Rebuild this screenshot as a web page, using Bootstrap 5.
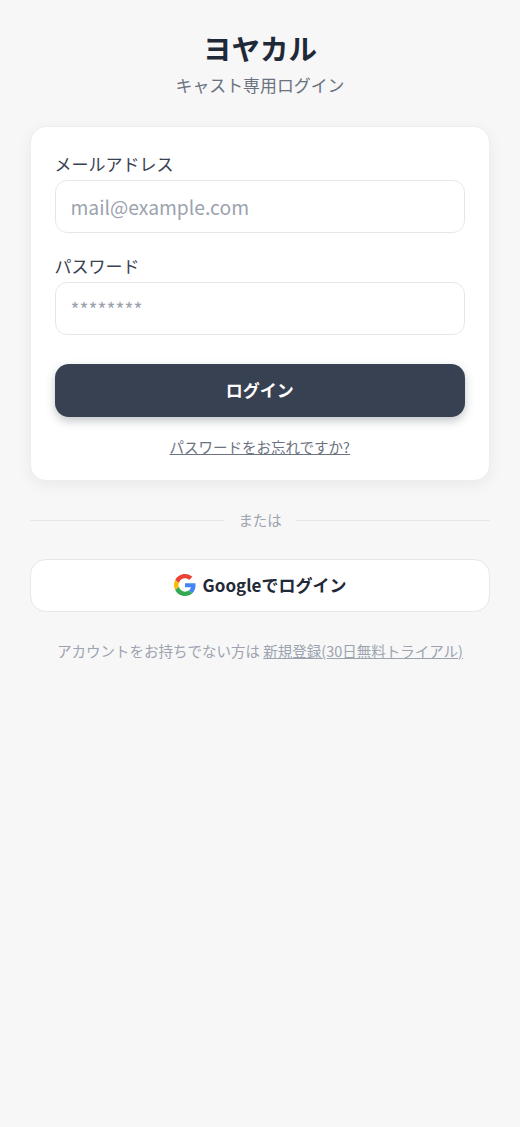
<!DOCTYPE html>
<html lang="ja">
<head>
<meta charset="utf-8">
<meta name="viewport" content="width=device-width, initial-scale=1">
<title>ヨヤカル</title>
<link rel="stylesheet" href="https://cdn.jsdelivr.net/npm/bootstrap@5.3.0/dist/css/bootstrap.min.css">
<style>
body{background:#f7f7f8;font-family:"Noto Sans CJK JP","Noto Sans",sans-serif;color:#1f2937;min-height:1127px}
.page-wrap{padding:29px 30px 0}
.brand-title{font-size:28.5px;font-weight:700;line-height:38px;color:#1f2937;margin:0 0 6px}
.brand-sub{font-size:16.9px;line-height:24px;color:#6b7280;margin:0 0 29px}
.login-card{border:1px solid #eceef1;border-radius:16px;box-shadow:0 4px 16px rgba(0,0,0,.06);padding:24px 24px 22px 23.5px}
.field-label{font-size:17px;line-height:26px;color:#374151;margin:0 0 3px;display:block}
.field-input.form-control{height:53px;border:1px solid #e5e7eb;border-radius:12px;font-size:19.3px;padding:0 15px;color:#1f2937}
.field-input.form-control::placeholder{color:#9ca3af;opacity:1}
.field-gap{margin-bottom:20px}
.field-last{margin-bottom:29px}
.btn-login.btn{height:53px;padding:0 12px 2px;background:#374151;border:0;border-radius:14px;color:#fff;font-size:17px;font-weight:700;box-shadow:0 4px 10px rgba(55,65,81,.3)}
.forgot-link{display:block;margin-top:19px;font-size:14.5px;line-height:22px;color:#6b7280;text-align:center}
.or-row{margin:28px 0 28px;color:#9ca3af;font-size:14.4px;line-height:22px;gap:14px}
.or-line{flex:1;height:1px;background:#e5e7eb}
.btn-google.btn{height:53px;padding:0 12px 2px;background:#fff;border:1px solid #e5e7eb;border-radius:16px;color:#1f2937;font-size:17px;font-weight:700;gap:7px}
.footer-note{margin:28px 0 0;font-size:14.5px;line-height:22px;color:#9ca3af;text-align:center}
.footer-note a{color:#9ca3af}
</style>
</head>
<body>
<main class="page-wrap">
  <header class="text-center">
    <h1 class="brand-title">ヨヤカル</h1>
    <p class="brand-sub">キャスト専用ログイン</p>
  </header>
  <form class="login-card bg-white">
    <div class="field-gap">
      <label class="field-label" for="em">メールアドレス</label>
      <input id="em" type="email" class="form-control field-input" placeholder="mail@example.com">
    </div>
    <div class="field-last">
      <label class="field-label" for="pw">パスワード</label>
      <input id="pw" type="password" class="form-control field-input" placeholder="********">
    </div>
    <button type="button" class="btn btn-login w-100">ログイン</button>
    <a href="#" class="forgot-link">パスワードをお忘れですか?</a>
  </form>
  <div class="or-row d-flex align-items-center">
    <span class="or-line"></span><span>または</span><span class="or-line"></span>
  </div>
  <button type="button" class="btn btn-google w-100 d-flex align-items-center justify-content-center">
    <svg width="22" height="22" viewBox="0 0 48 48" aria-hidden="true">
      <path fill="#EA4335" d="M24 9.5c3.54 0 6.71 1.22 9.21 3.6l6.85-6.85C35.9 2.38 30.47 0 24 0 14.62 0 6.51 5.38 2.56 13.22l7.98 6.19C12.43 13.72 17.74 9.5 24 9.5z"/>
      <path fill="#4285F4" d="M46.98 24.55c0-1.57-.15-3.09-.38-4.55H24v9.02h12.94c-.58 2.96-2.26 5.48-4.78 7.18l7.73 6c4.51-4.18 7.09-10.36 7.09-17.65z"/>
      <path fill="#FBBC05" d="M10.53 28.59c-.48-1.45-.76-2.99-.76-4.59s.27-3.14.76-4.59l-7.98-6.19C.92 16.46 0 20.12 0 24c0 3.88.92 7.54 2.56 10.78l7.97-6.19z"/>
      <path fill="#34A853" d="M24 48c6.48 0 11.93-2.13 15.89-5.81l-7.73-6c-2.15 1.45-4.92 2.3-8.16 2.3-6.26 0-11.57-4.22-13.47-9.91l-7.98 6.19C6.51 42.62 14.62 48 24 48z"/>
    </svg>
    <span>Googleでログイン</span>
  </button>
  <p class="footer-note">アカウントをお持ちでない方は <a href="#">新規登録(30日無料トライアル)</a></p>
</main>
<script src="https://cdn.jsdelivr.net/npm/bootstrap@5.3.0/dist/js/bootstrap.bundle.min.js"></script>
</body>
</html>
